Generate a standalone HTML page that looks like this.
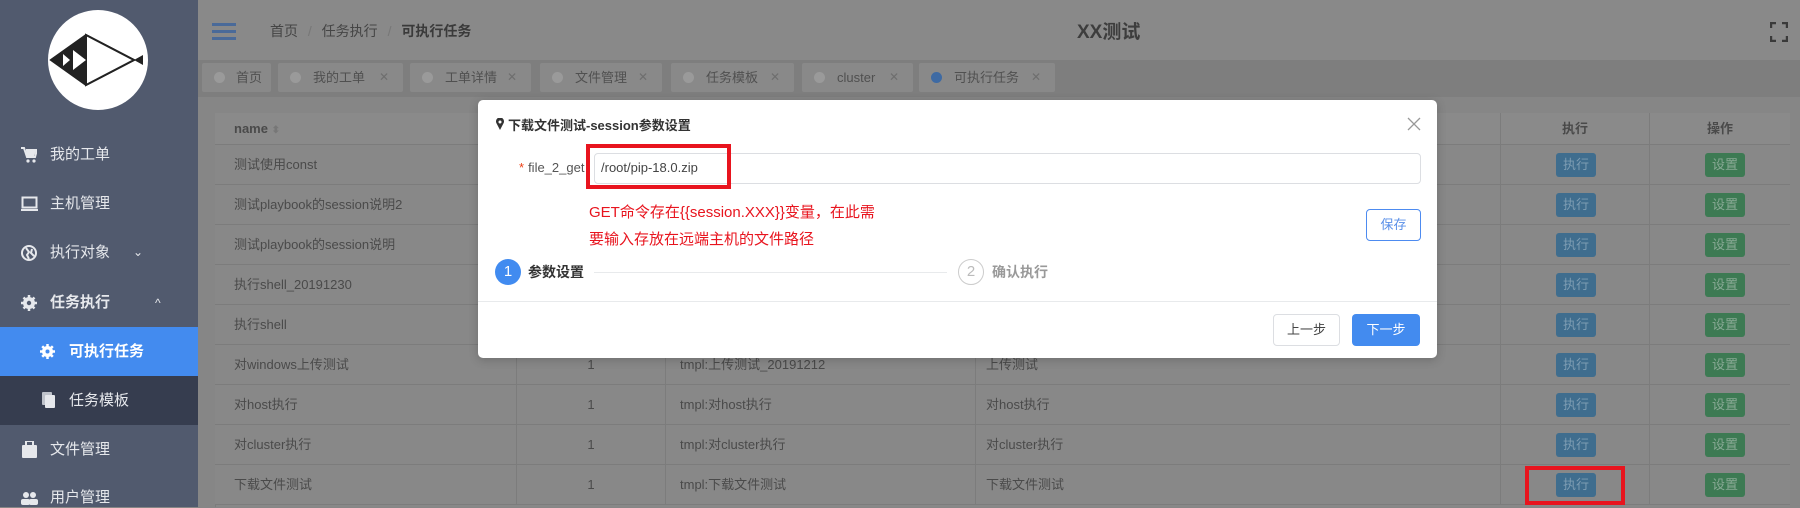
<!DOCTYPE html>
<html><head><meta charset="utf-8"><style>
*{margin:0;padding:0;box-sizing:border-box}
body{width:1800px;height:507px;overflow:hidden;position:relative;background:#868686;font-family:"Liberation Sans","Noto Sans CJK SC",sans-serif;font-size:14px;color:#454545}
.a{position:absolute}
.side{left:0;top:0;width:198px;height:507px;background:#515a6e}
.mi{position:absolute;left:0;width:198px;color:#e6e8ec;font-size:15px;line-height:20px}
.mi .t{position:absolute;left:50px}
.tab{position:absolute;top:63px;height:29px;background:#898989;border-radius:2px;font-size:13px;color:#505050;line-height:29px}
.tab .d{position:absolute;left:12px;top:9px;width:11px;height:11px;border-radius:50%;background:#9a9a9a}
.tab .x{position:absolute;right:14px;color:#6e6e6e;font-size:12px}
.tab .l{position:absolute;left:32px}
.row{position:absolute;left:215px;width:1575px;height:40px;border-bottom:1px solid #7c7c7c;background:#888}
.c{position:absolute;top:0;height:40px;line-height:40px;font-size:13px;color:#4a4a4a;border-right:1px solid #7c7c7c}
.bx{position:absolute;top:8px;width:40px;height:24px;border-radius:3px;font-size:13px;line-height:24px;text-align:center}
.ex{left:55px;background:#3f6d8e;color:#7e9db3}
.st{left:55px;background:#3d7a53;color:#89a995}
</style></head><body>
<!-- header -->
<div class="a" style="left:198px;top:0;width:1602px;height:60px;background:#898989"></div>
<div class="a" style="left:212px;top:23px;width:24px;height:3px;background:#4a6a99"></div>
<div class="a" style="left:212px;top:30px;width:24px;height:3px;background:#4a6a99"></div>
<div class="a" style="left:212px;top:37px;width:24px;height:3px;background:#4a6a99"></div>
<div class="a" style="left:270px;top:21px;font-size:14px;color:#454545">首页 <span style="color:#777;margin:0 6px">/</span> 任务执行 <span style="color:#777;margin:0 6px">/</span> <b style="color:#3a3a3a">可执行任务</b></div>
<div class="a" style="left:1077px;top:17px;font-size:19px;font-weight:bold;color:#3d3d3d">XX测试</div>
<svg class="a" style="left:1770px;top:22px" width="18" height="20" viewBox="0 0 18 20"><path d="M1 6V1h5M12 1h5v5M17 14v5h-5M6 19H1v-5" fill="none" stroke="#3a3a3a" stroke-width="2.4"/></svg>
<!-- tabs strip -->
<div class="a" style="left:198px;top:60px;width:1602px;height:37px;background:#7e7e7e"></div>
<div class="tab" style="left:202px;width:69px"><span class="d"></span><span class="l" style="left:34px">首页</span></div>
<div class="tab" style="left:278px;width:125px"><span class="d"></span><span class="l" style="left:35px">我的工单</span><span class="x">✕</span></div>
<div class="tab" style="left:410px;width:121px"><span class="d"></span><span class="l" style="left:35px">工单详情</span><span class="x">✕</span></div>
<div class="tab" style="left:540px;width:122px"><span class="d"></span><span class="l" style="left:35px">文件管理</span><span class="x">✕</span></div>
<div class="tab" style="left:671px;width:123px"><span class="d"></span><span class="l" style="left:35px">任务模板</span><span class="x">✕</span></div>
<div class="tab" style="left:802px;width:111px"><span class="d"></span><span class="l" style="left:35px">cluster</span><span class="x">✕</span></div>
<div class="tab" style="left:919px;width:136px"><span class="d" style="background:#3e6aa3"></span><span class="l" style="left:35px">可执行任务</span><span class="x">✕</span></div>
<!-- table -->
<div class="a" style="left:215px;top:113px;width:1575px;height:394px;background:#888;border-left:1px solid #7c7c7c;border-top:1px solid #7c7c7c"></div>
<div class="row" style="top:113px;height:32px;background:#8a8a8a">
<div class="c" style="left:0;width:302px;height:32px;line-height:32px;padding-left:19px;font-weight:bold">name <span style="color:#777;font-size:10px">⬍</span></div>
<div class="c" style="left:302px;width:149px;height:32px"></div>
<div class="c" style="left:451px;width:310px;height:32px"></div>
<div class="c" style="left:761px;width:525px;height:32px"></div>
<div class="c" style="left:1286px;width:149px;height:32px;line-height:32px;text-align:center;font-weight:bold">执行</div>
<div class="c" style="left:1435px;width:140px;height:32px;line-height:32px;text-align:center;font-weight:bold;border:none">操作</div>
</div>
<div id="rows"></div>
<script>
var d=[["测试使用const","","",""],["测试playbook的session说明2","","",""],["测试playbook的session说明","","",""],["执行shell_20191230","","",""],["执行shell","","",""],["对windows上传测试","1","tmpl:上传测试_20191212","上传测试"],["对host执行","1","tmpl:对host执行","对host执行"],["对cluster执行","1","tmpl:对cluster执行","对cluster执行"],["下载文件测试","1","tmpl:下载文件测试","下载文件测试"]];
var h="";d.forEach(function(r,i){var t=145+i*40;h+='<div class="row" style="top:'+t+'px"><div class="c" style="left:0;width:302px;padding-left:19px">'+r[0]+'</div><div class="c" style="left:302px;width:149px;text-align:center">'+r[1]+'</div><div class="c" style="left:451px;width:310px;padding-left:14px">'+r[2]+'</div><div class="c" style="left:761px;width:525px;padding-left:10px">'+r[3]+'</div><div class="c" style="left:1286px;width:149px"><div class="bx ex">执行</div></div><div class="c" style="left:1435px;width:140px;border:none"><div class="bx st">设置</div></div></div>';});
document.getElementById("rows").outerHTML=h;
</script>
<div class="a" style="left:1525px;top:466px;width:100px;height:39px;border:4px solid #e8141e"></div>
<!-- sidebar -->
<div class="a side"></div>
<div class="a" style="left:48px;top:10px;width:100px;height:100px;border-radius:50%;background:#fff"></div>
<svg class="a" style="left:48px;top:10px" width="100" height="100" viewBox="0 0 100 100"><path d="M3 50L38 25L86 50L38 75Z" fill="#fff" stroke="#222" stroke-width="2"/><path d="M3 50L38 25V75Z" fill="#222"/><path d="M38 25L86 50L38 75Z" fill="#fff" stroke="#222" stroke-width="2"/><path d="M25 40L38 50L25 60Z M15 44L22 50L15 56Z" fill="#fff"/><path d="M86 50L95 45V55Z" fill="#222"/></svg>
<div class="mi" style="top:145px"><svg class="a" style="left:21px;top:2px" width="16" height="16" viewBox="0 0 16 16"><path d="M0 1h3l3 9h8l2-7H5" fill="none" stroke="#e6e8ec" stroke-width="2"/><circle cx="7" cy="14" r="1.6" fill="#e6e8ec"/><circle cx="13" cy="14" r="1.6" fill="#e6e8ec"/><path d="M5 4h10l-2 5H6z" fill="#e6e8ec"/></svg><span class="t">我的工单</span></div>
<div class="mi" style="top:194px"><svg class="a" style="left:21px;top:2px" width="17" height="16"><rect x="1.5" y="1.5" width="14" height="10" fill="none" stroke="#e6e8ec" stroke-width="2"/><rect x="0" y="13" width="17" height="2" fill="#e6e8ec"/></svg><span class="t">主机管理</span></div>
<div class="mi" style="top:243px"><svg class="a" style="left:21px;top:2px" width="16" height="16"><circle cx="8" cy="8" r="7" fill="none" stroke="#e6e8ec" stroke-width="2"/><path d="M5 3l3 4-2 3 2 4M11 4l-1 4 3 3" stroke="#e6e8ec" stroke-width="2" fill="none"/></svg><span class="t">执行对象</span><span class="a" style="left:133px;top:-1px;font-size:12px">⌄</span></div>
<div class="mi" style="top:293px"><svg class="a" style="left:21px;top:2px" width="16" height="16"><circle cx="8" cy="8" r="6" fill="#e6e8ec"/><circle cx="8" cy="8" r="2.2" fill="#515a6e"/><path d="M8 0v16M0 8h16M2.5 2.5l11 11M13.5 2.5l-11 11" stroke="#e6e8ec" stroke-width="2.5"/><circle cx="8" cy="8" r="2.2" fill="#515a6e"/></svg><span class="t" style="font-weight:bold">任务执行</span><span class="a" style="left:155px;top:0;font-size:12px">^</span></div>
<div class="a" style="left:0;top:327px;width:198px;height:49px;background:#438bef"></div>
<div class="mi" style="top:342px;color:#fff"><svg class="a" style="left:40px;top:2px" width="15" height="15"><circle cx="7.5" cy="7.5" r="5.5" fill="#fff"/><path d="M7.5 0v15M0 7.5h15M2.2 2.2l10.6 10.6M12.8 2.2l-10.6 10.6" stroke="#fff" stroke-width="2.5"/><circle cx="7.5" cy="7.5" r="2" fill="#438bef"/></svg><span class="t" style="left:69px;font-weight:bold">可执行任务</span></div>
<div class="a" style="left:0;top:376px;width:198px;height:49px;background:#363d4f"></div>
<div class="mi" style="top:391px"><svg class="a" style="left:42px;top:1px" width="14" height="17"><rect x="0" y="0" width="10" height="13" rx="1" fill="#bfc3cb"/><rect x="3" y="3" width="10" height="13" rx="1" fill="#e6e8ec"/></svg><span class="t" style="left:69px">任务模板</span></div>
<div class="mi" style="top:440px"><svg class="a" style="left:22px;top:1px" width="15" height="17"><rect x="0" y="4" width="15" height="13" rx="1" fill="#e6e8ec"/><rect x="4" y="0" width="7" height="5" fill="none" stroke="#e6e8ec" stroke-width="2"/></svg><span class="t">文件管理</span></div>
<div class="mi" style="top:488px"><svg class="a" style="left:21px;top:3px" width="17" height="14"><circle cx="5" cy="4" r="3" fill="#e6e8ec"/><circle cx="12" cy="4" r="3" fill="#e6e8ec"/><rect x="0" y="8" width="9" height="6" rx="2" fill="#e6e8ec"/><rect x="8" y="8" width="9" height="6" rx="2" fill="#e6e8ec"/></svg><span class="t">用户管理</span></div>
<!-- modal -->
<div class="a" style="left:478px;top:100px;width:959px;height:258px;background:#fff;border-radius:5px;box-shadow:0 2px 10px rgba(0,0,0,.2)"></div>
<svg class="a" style="left:496px;top:118px" width="8" height="12" viewBox="0 0 8 12"><path d="M4 12L0.6 5.5A4 4 0 1 1 7.4 5.5Z" fill="#333"/><circle cx="4" cy="4" r="1.5" fill="#fff"/></svg>
<div class="a" style="left:508px;top:115px;font-size:13px;font-weight:bold;color:#333">下载文件测试-session参数设置</div>
<svg class="a" style="left:1407px;top:117px" width="14" height="14"><path d="M1 1l12 12M13 1L1 13" stroke="#999" stroke-width="1.3"/></svg>
<div class="a" style="left:519px;top:160px;font-size:13px;color:#555"><span style="color:#ed3f14;margin-right:4px">*</span>file_2_get</div>
<div class="a" style="left:594px;top:153px;width:827px;height:31px;border:1px solid #dcdee2;border-radius:4px"></div>
<div class="a" style="left:601px;top:160px;font-size:13px;color:#444">/root/pip-18.0.zip</div>
<div class="a" style="left:586px;top:144px;width:145px;height:45px;border:4px solid #e8141e"></div>
<div class="a" style="left:589px;top:199px;font-size:15px;color:#e8141e;line-height:27px">GET命令存在{{session.XXX}}变量，在此需<br>要输入存放在远端主机的文件路径</div>
<div class="a" style="left:1366px;top:209px;width:55px;height:32px;border:1px solid #4d8bf0;border-radius:4px;font-size:13px;color:#5a8fe8;text-align:center;line-height:30px">保存</div>
<div class="a" style="left:495px;top:259px;width:26px;height:26px;border-radius:50%;background:#418bf0;color:#fff;text-align:center;line-height:26px;font-size:15px">1</div>
<div class="a" style="left:528px;top:262px;font-size:14px;font-weight:bold;color:#333">参数设置</div>
<div class="a" style="left:594px;top:272px;width:353px;height:1px;background:#e8eaec"></div>
<div class="a" style="left:958px;top:259px;width:26px;height:26px;border-radius:50%;border:1px solid #ccc;color:#bbb;text-align:center;line-height:24px;font-size:15px">2</div>
<div class="a" style="left:992px;top:262px;font-size:14px;font-weight:bold;color:#999">确认执行</div>
<div class="a" style="left:478px;top:301px;width:959px;height:1px;background:#e8eaec"></div>
<div class="a" style="left:1273px;top:314px;width:67px;height:32px;border:1px solid #dcdee2;border-radius:4px;text-align:center;line-height:30px;font-size:13px;color:#444">上一步</div>
<div class="a" style="left:1352px;top:314px;width:68px;height:32px;background:#438bef;border-radius:4px;text-align:center;line-height:32px;font-size:13px;color:#fff">下一步</div>
</body></html>
